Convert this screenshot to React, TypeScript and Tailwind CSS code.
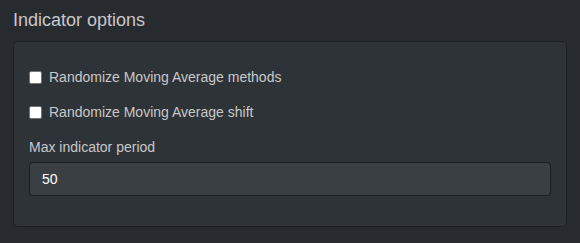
import React from "react";

const App = () => {
  return (
    <div
      className="w-[580px] h-[243px] bg-[#272b30] text-[#c8c8c8] px-[13px] pt-[10px]"
      style={{ fontFamily: '"Liberation Sans", Arial, sans-serif' }}
    >
      <h4 className="text-[18px] leading-[20px] font-normal">Indicator options</h4>
      <div className="mt-[11px] h-[186px] rounded-[4px] border border-[#1c1e22] bg-[#2e3338] px-[15px] pt-[25px]">
        <label className="flex h-[20px] items-center text-[14px] leading-[20px]">
          <span className="mr-[7px] h-[13px] w-[13px] rounded-[2px] border border-[#767676] bg-white" />
          Randomize Moving Average methods
        </label>
        <label className="mt-[15px] flex h-[20px] items-center text-[14px] leading-[20px]">
          <span className="mr-[7px] h-[13px] w-[13px] rounded-[2px] border border-[#767676] bg-white" />
          Randomize Moving Average shift
        </label>
        <div className="mt-[15px] text-[14px] leading-[20px]">Max indicator period</div>
        <div className="mt-[5px] flex h-[34px] items-center rounded-[4px] border border-[#1c1e22] bg-[#3a3f44] px-[12px] text-[14px] text-[#ffffff]">
          50
        </div>
      </div>
    </div>
  );
};

export default App;
